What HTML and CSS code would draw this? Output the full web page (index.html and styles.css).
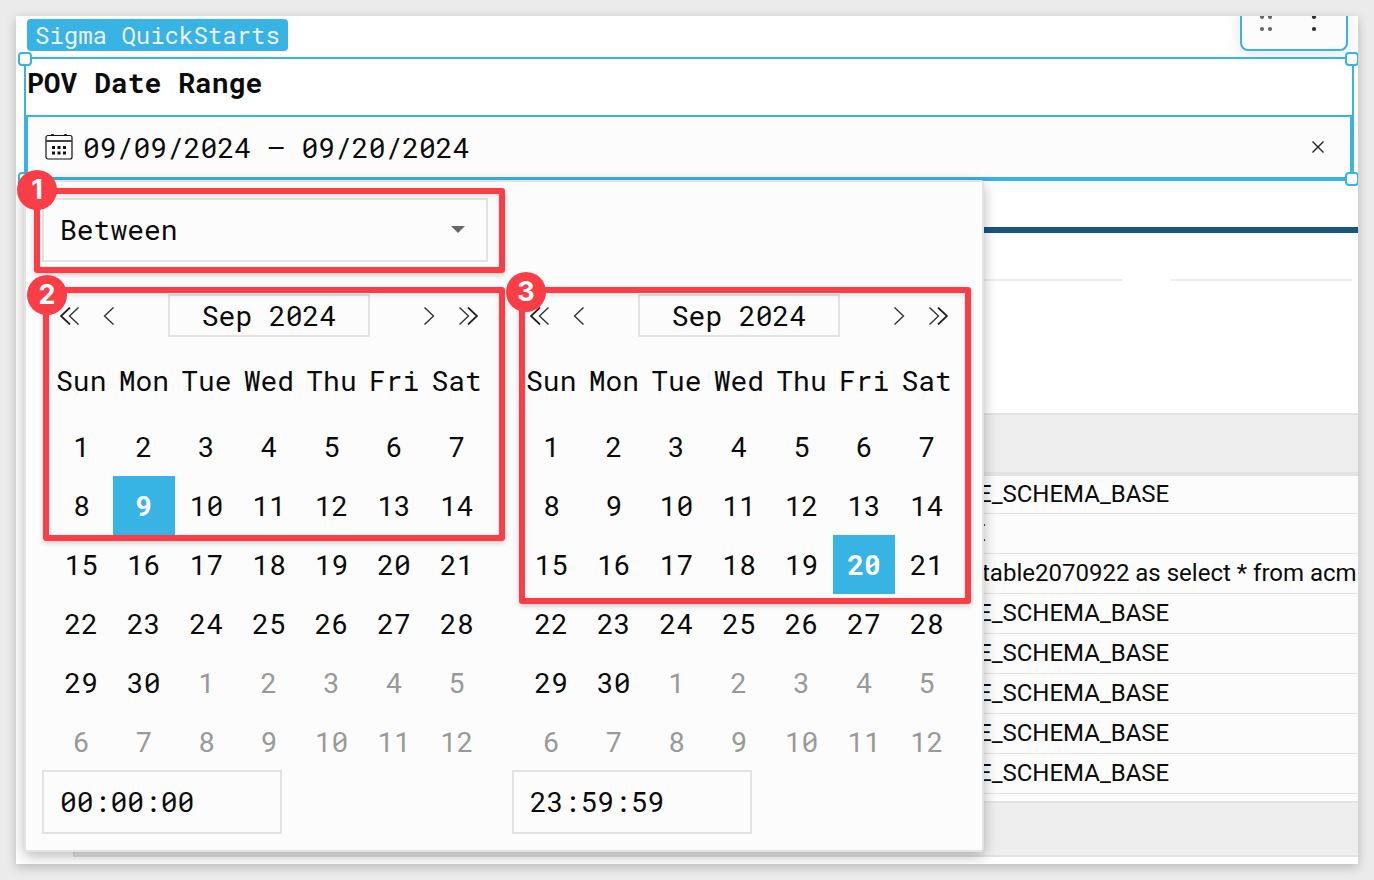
FILE: index.html
```html
<!DOCTYPE html>
<html lang="en">
<head>
<meta charset="utf-8">
<title>Sigma QuickStarts</title>
<link rel="stylesheet" href="styles.css">
</head>
<body>
<main class="window">
  <header class="topbar">
    <span class="tag">Sigma QuickStarts</span>
    <div class="toolbar">
      <button class="tool" type="button" aria-label="Drag"><svg width="16" height="18" viewBox="0 0 16 18" fill="#666"><circle cx="4" cy="3" r="2.1"/><circle cx="12" cy="3" r="2.1"/><circle cx="4" cy="15" r="2.1"/><circle cx="12" cy="15" r="2.1"/></svg></button>
      <button class="tool" type="button" aria-label="More options"><svg width="16" height="18" viewBox="0 0 16 18" fill="#2b2b2b"><circle cx="8" cy="3" r="2.1"/><circle cx="8" cy="15" r="2.1"/></svg></button>
    </div>
  </header>

  <section class="control">
    <h1 class="control-label">POV Date Range</h1>
    <div class="field">
      <button class="field-value" type="button" aria-haspopup="dialog" aria-expanded="true">
        <svg width="28" height="28" viewBox="0 0 28 28" fill="none" stroke="#111" stroke-width="1.2"><rect x="1" y="2.500" width="26" height="23.500" rx="2"/><path d="M1 8h26" stroke="#444" stroke-width="2"/><path d="M7.500 1v2M20.500 1v2" stroke-width="2.500"/><g fill="#111" stroke="none"><path d="M7 13h3v3H7zM12.500 13h3v3h-3zM18 13h3v3h-3zM7 18.500h3v3H7zM12.500 18.500h3v3h-3zM18 18.500h3v3h-3z"/></g></svg>
        <span>09/09/2024 – 09/20/2024</span>
      </button>
      <button class="clear" type="button" aria-label="Clear"><svg width="12" height="12" viewBox="0 0 12 12" stroke="#222" stroke-width="1.400"><path d="M.5.5l11 11M11.500.5l-11 11"/></svg></button>
    </div>
    <i class="handle nw"></i><i class="handle ne"></i><i class="handle sw"></i><i class="handle se"></i>

    <div class="popover" role="dialog" aria-label="Date range">
      <div class="mode">
        <select class="mode-select" aria-label="Range type"><option>Between</option></select>
        <svg class="caret" width="14" height="7" viewBox="0 0 14 7" fill="#666"><path d="M0 0h14L7 7z"/></svg>
        <div class="callout callout-one"><span class="badge">1</span></div>
      </div>

      <div class="calendars">
        <section class="calendar">
          <div class="nav">
            <button class="arrow" type="button" aria-label="Previous year"><svg width="20" height="18" viewBox="0 0 20 18"><path class="dark" d="M10 .5L1 9l9 8.500"/><path d="M18.500 .5l-9 8.500 9 8.500"/></svg></button>
            <button class="arrow" type="button" aria-label="Previous month"><svg width="20" height="18" viewBox="0 0 20 18"><path d="M13.500 .5l-9 8.500 9 8.500"/></svg></button>
            <button class="month" type="button">Sep 2024</button>
            <button class="arrow" type="button" aria-label="Next month"><svg width="20" height="18" viewBox="0 0 20 18"><path d="M6.500 .5l9 8.500-9 8.500"/></svg></button>
            <button class="arrow" type="button" aria-label="Next year"><svg width="20" height="18" viewBox="0 0 20 18"><path d="M1.500 .5l9 8.500-9 8.500"/><path class="dark" d="M10 .5L19 9l-9 8.500"/></svg></button>
          </div>
          <table class="days">
            <thead><tr><th>Sun</th><th>Mon</th><th>Tue</th><th>Wed</th><th>Thu</th><th>Fri</th><th>Sat</th></tr></thead>
            <tbody>
              <tr><td><button>1</button></td><td><button>2</button></td><td><button>3</button></td><td><button>4</button></td><td><button>5</button></td><td><button>6</button></td><td><button>7</button></td></tr>
              <tr><td><button>8</button></td><td><button class="selected">9</button></td><td><button>10</button></td><td><button>11</button></td><td><button>12</button></td><td><button>13</button></td><td><button>14</button></td></tr>
              <tr><td><button>15</button></td><td><button>16</button></td><td><button>17</button></td><td><button>18</button></td><td><button>19</button></td><td><button>20</button></td><td><button>21</button></td></tr>
              <tr><td><button>22</button></td><td><button>23</button></td><td><button>24</button></td><td><button>25</button></td><td><button>26</button></td><td><button>27</button></td><td><button>28</button></td></tr>
              <tr><td><button>29</button></td><td><button>30</button></td><td><button class="outside">1</button></td><td><button class="outside">2</button></td><td><button class="outside">3</button></td><td><button class="outside">4</button></td><td><button class="outside">5</button></td></tr>
              <tr><td><button class="outside">6</button></td><td><button class="outside">7</button></td><td><button class="outside">8</button></td><td><button class="outside">9</button></td><td><button class="outside">10</button></td><td><button class="outside">11</button></td><td><button class="outside">12</button></td></tr>
            </tbody>
          </table>
          <input class="time" type="text" value="00:00:00" aria-label="Start time">
          <div class="callout callout-two"><span class="badge">2</span></div>
        </section>

        <section class="calendar">
          <div class="nav">
            <button class="arrow" type="button" aria-label="Previous year"><svg width="20" height="18" viewBox="0 0 20 18"><path class="dark" d="M10 .5L1 9l9 8.500"/><path d="M18.500 .5l-9 8.500 9 8.500"/></svg></button>
            <button class="arrow" type="button" aria-label="Previous month"><svg width="20" height="18" viewBox="0 0 20 18"><path d="M13.500 .5l-9 8.500 9 8.500"/></svg></button>
            <button class="month" type="button">Sep 2024</button>
            <button class="arrow" type="button" aria-label="Next month"><svg width="20" height="18" viewBox="0 0 20 18"><path d="M6.500 .5l9 8.500-9 8.500"/></svg></button>
            <button class="arrow" type="button" aria-label="Next year"><svg width="20" height="18" viewBox="0 0 20 18"><path d="M1.500 .5l9 8.500-9 8.500"/><path class="dark" d="M10 .5L19 9l-9 8.500"/></svg></button>
          </div>
          <table class="days">
            <thead><tr><th>Sun</th><th>Mon</th><th>Tue</th><th>Wed</th><th>Thu</th><th>Fri</th><th>Sat</th></tr></thead>
            <tbody>
              <tr><td><button>1</button></td><td><button>2</button></td><td><button>3</button></td><td><button>4</button></td><td><button>5</button></td><td><button>6</button></td><td><button>7</button></td></tr>
              <tr><td><button>8</button></td><td><button>9</button></td><td><button>10</button></td><td><button>11</button></td><td><button>12</button></td><td><button>13</button></td><td><button>14</button></td></tr>
              <tr><td><button>15</button></td><td><button>16</button></td><td><button>17</button></td><td><button>18</button></td><td><button>19</button></td><td><button class="selected">20</button></td><td><button>21</button></td></tr>
              <tr><td><button>22</button></td><td><button>23</button></td><td><button>24</button></td><td><button>25</button></td><td><button>26</button></td><td><button>27</button></td><td><button>28</button></td></tr>
              <tr><td><button>29</button></td><td><button>30</button></td><td><button class="outside">1</button></td><td><button class="outside">2</button></td><td><button class="outside">3</button></td><td><button class="outside">4</button></td><td><button class="outside">5</button></td></tr>
              <tr><td><button class="outside">6</button></td><td><button class="outside">7</button></td><td><button class="outside">8</button></td><td><button class="outside">9</button></td><td><button class="outside">10</button></td><td><button class="outside">11</button></td><td><button class="outside">12</button></td></tr>
            </tbody>
          </table>
          <input class="time" type="text" value="23:59:59" aria-label="End time">
          <div class="callout callout-three"><span class="badge">3</span></div>
        </section>
      </div>
    </div>
  </section>

  <div class="rule"></div>
  <div class="dividers"><span class="divider"></span><span class="divider divider-end"></span></div>

  <div class="grid">
    <table class="rows">
      <thead><tr><th></th></tr></thead>
      <tbody>
        <tr><td class="schema">E_SCHEMA_BASE</td></tr>
        <tr><td class="short">E</td></tr>
        <tr><td class="query">table2070922 as select * from acm</td></tr>
        <tr><td class="schema">E_SCHEMA_BASE</td></tr>
        <tr><td class="schema">E_SCHEMA_BASE</td></tr>
        <tr><td class="schema">E_SCHEMA_BASE</td></tr>
        <tr><td class="schema">E_SCHEMA_BASE</td></tr>
        <tr><td class="schema">E_SCHEMA_BASE</td></tr>
      </tbody>
    </table>
    <div class="grid-footer"></div>
  </div>
</main>
</body>
</html>
```
FILE: styles.css
```css
:root {
  --blue: #37b3e4;
  --red: #f93e48;
  --line: #e3e3e3;
  --surface: #fcfcfc;
  --ink: #0b0b0b;
  --mono: "Roboto Mono", "DejaVu Sans Mono", "Liberation Mono", monospace;
}

* { box-sizing: border-box; }

body {
  margin: 0;
  padding: 16px;
  min-height: 100vh;
  background: #ebebeb;
  color: var(--ink);
  font: 28px/32px var(--mono);
}

button, input, select { font: inherit; color: inherit; border-radius: 0; }
button { padding: 0; border: 0; background: none; }
svg { display: block; }

.window {
  overflow: hidden;
  padding-bottom: 7px;
  background: #fff;
  box-shadow: 0 3px 10px rgba(0, 0, 0, .22);
}

/* Top bar */
.topbar {
  display: flex;
  justify-content: space-between;
  align-items: flex-end;
  height: 41px;
  padding: 0 10px 6px 11px;
}
.tag {
  padding: 0 8px;
  border-radius: 4px;
  background: var(--blue);
  color: #eee;
  font-size: 24px;
  line-height: 32px;
}
.toolbar {
  display: flex;
  height: 48px;
  padding: 0 8px;
  border: 2px solid var(--blue);
  border-radius: 8px;
  background: var(--surface);
  box-shadow: 0 4px 16px rgba(0, 0, 0, .1);
}
.tool {
  display: grid;
  place-items: start center;
  width: 44px;
  padding-top: 9px;
}
.tool:first-child { width: 32px; }
.tool:last-child { width: 56px; padding-left: 8px; }

/* Selected control */
.control {
  position: relative;
  margin: 0 4px 0 8px;
  border: 2px solid var(--blue);
}
.control-label {
  margin: 0;
  padding: 0 1px 8px;
  font-size: 28px;
  line-height: 48px;
}
.field {
  display: flex;
  align-items: center;
  height: 64px;
  padding: 0 24px 0 17px;
  border: 2px solid var(--blue);
  background: var(--surface);
}
.field-value {
  flex: 1;
  display: flex;
  align-items: center;
  gap: 10px;
  line-height: 34px;
  text-align: left;
}
.field-value span { padding-top: 2px; }
.clear {
  display: grid;
  place-items: center;
  width: 16px;
  height: 32px;
}

.handle {
  position: absolute;
  width: 14px;
  height: 14px;
  border: 2px solid var(--blue);
  border-radius: 4px;
  background: #fff;
}
.nw { left: -8px; top: -7px; }
.ne { right: -7px; top: -7px; }
.sw { left: -8px; bottom: -7px; }
.se { right: -7px; bottom: -7px; }

/* Date popover */
.popover {
  position: absolute;
  z-index: 2;
  top: 121px;
  left: -2px;
  width: 960px;
  padding: 16px;
  border: 2px solid var(--line);
  border-radius: 3px;
  background: var(--surface);
  box-shadow: 0 4px 14px rgba(0, 0, 0, .28);
}
.mode {
  position: relative;
  width: 446px;
  margin-bottom: 32px;
}
.mode-select {
  display: block;
  width: 100%;
  height: 64px;
  padding: 0 16px;
  border: 2px solid var(--line);
  appearance: none;
  background: var(--surface);
}
.caret {
  position: absolute;
  top: 28px;
  right: 23px;
  pointer-events: none;
}

.calendars {
  display: grid;
  grid-template-columns: 446px 446px;
  gap: 24px;
}
.calendar { position: relative; }
.nav {
  display: flex;
  padding-left: 8px;
}
.arrow {
  display: grid;
  place-items: center;
  width: 40px;
}
.arrow path {
  fill: none;
  stroke: #333;
  stroke-width: 1.400;
}
.arrow .dark { stroke: #222; stroke-width: 1.800; }
.month {
  flex: 1;
  height: 43px;
  margin: 0 38px;
  border: 2px solid var(--line);
}
.days {
  width: 438px;
  margin-left: 8px;
  border-collapse: collapse;
  table-layout: fixed;
}
.days th {
  height: 80px;
  padding: 8px 0 0;
  font-weight: 400;
}
.days td { padding: 0; }
.days button {
  display: block;
  width: 100%;
  height: 59px;
  text-align: center;
}
.days .selected {
  background: var(--blue);
  color: #fff;
  font-weight: 700;
}
.days .outside { color: #999; }
.time {
  display: block;
  width: 240px;
  height: 64px;
  margin-top: -1px;
  padding: 0 16px 2px;
  border: 2px solid var(--line);
  background: var(--surface);
}

/* Numbered callouts laid over the popover */
.callout {
  position: absolute;
  border: 6px solid var(--red);
  border-radius: 3px;
  box-shadow: 0 2px 5px rgba(0, 0, 0, .2), inset 0 2px 5px rgba(0, 0, 0, .12);
  pointer-events: none;
}
.callout-one { left: -8px; top: -10px; width: 471px; height: 85px; }
.callout-two { left: 1px; top: -7px; width: 462px; height: 254px; }
.callout-three { left: 7px; top: -7px; width: 452px; height: 317px; }
.badge {
  position: absolute;
  width: 40px;
  height: 40px;
  border-radius: 50%;
  background: var(--red);
  color: #fff;
  font: 700 27px/39px Inter, sans-serif;
  text-align: center;
}
.callout-one .badge { left: -23px; top: -24px; }
.callout-two .badge { left: -22px; top: -18px; }
.callout-three .badge { left: -19px; top: -21px; }

/* Page content behind the popover */
.rule {
  height: 6px;
  margin: 46px 0 46px 57px;
  background: #17557c;
}
.dividers {
  display: flex;
  gap: 49px;
  margin: 0 6px 132px 57px;
}
.divider {
  flex: 1;
  height: 2px;
  background: #eee;
}
.divider-end { flex: 0 0 181px; }

.grid {
  margin-left: 57px;
  border-left: 2px solid var(--line);
  background: var(--surface);
}
.rows {
  width: 100%;
  border-collapse: separate;
  border-spacing: 0;
  table-layout: fixed;
  font: 24px/36px Roboto, sans-serif;
}
.rows th {
  height: 63px;
  padding: 0;
  border-top: 2px solid var(--line);
  border-bottom: 4px solid var(--line);
  background: #eee;
}
.rows td {
  height: 40px;
  padding: 0 0 2px;
  border-bottom: 1px solid var(--line);
  overflow: hidden;
  white-space: nowrap;
}
.rows tr:first-child td { height: 38px; padding-bottom: 1px; }
.rows .schema { padding-left: 903px; }
.rows .short { padding-left: 897px; }
.rows .query { padding-left: 907px; }
.grid-footer {
  height: 56px;
  margin-top: 7px;
  border-top: 2px solid var(--line);
  border-bottom: 2px solid var(--line);
  background: #eee;
}
```
